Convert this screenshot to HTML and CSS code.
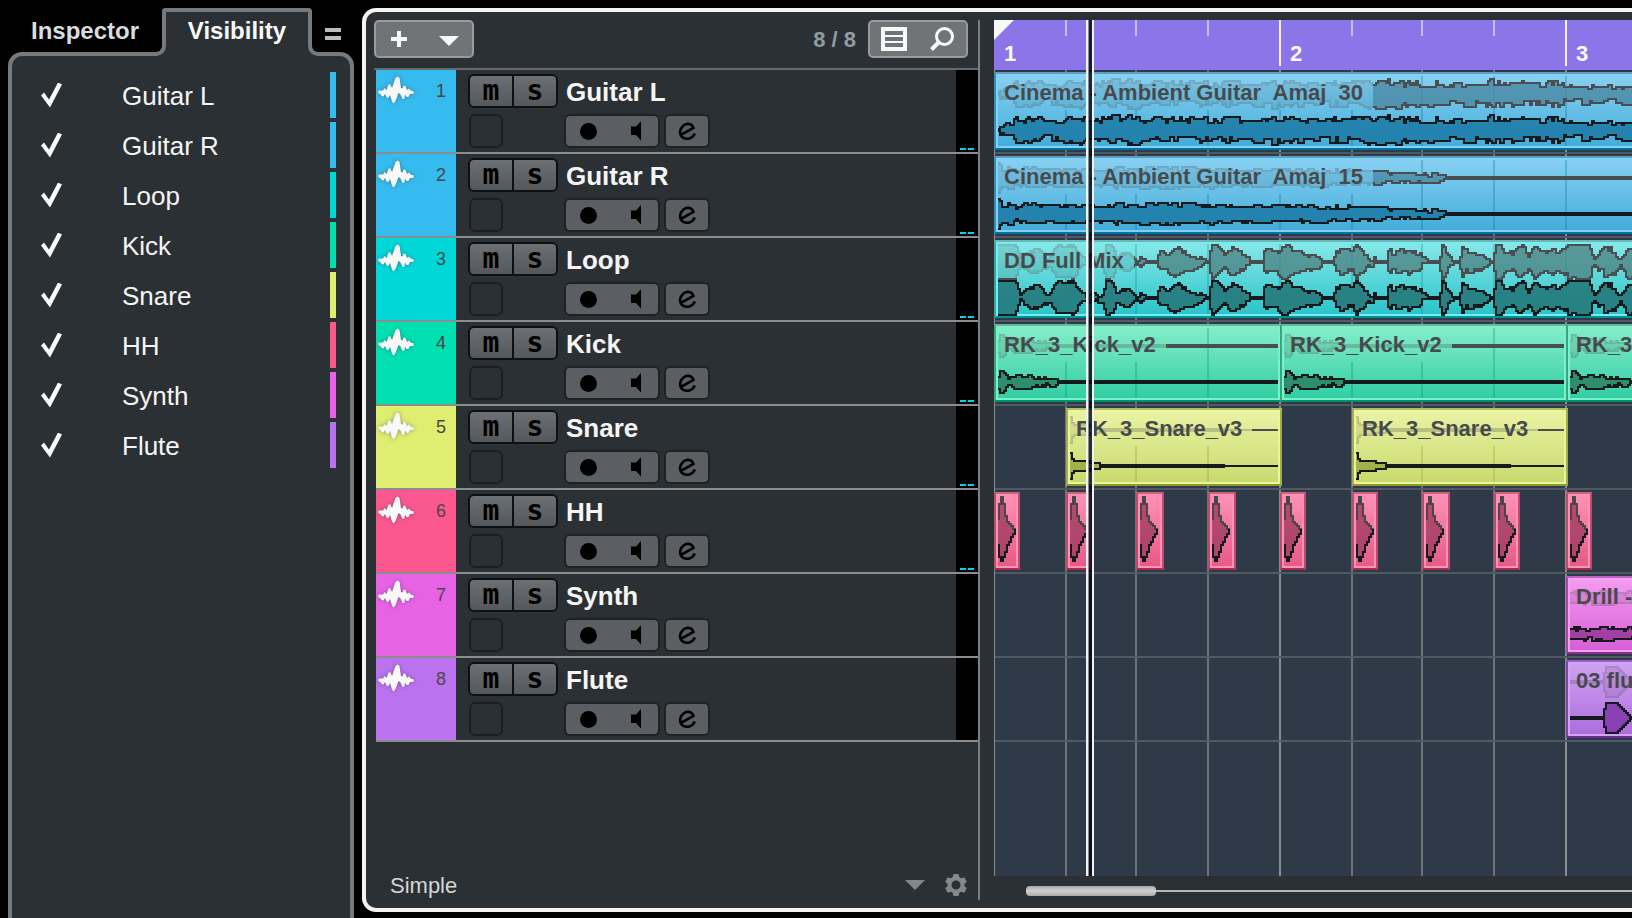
FILE: index.html
```html
<!DOCTYPE html>
<html lang="en">
<head>
<meta charset="utf-8">
<title>Project</title>
<link rel="stylesheet" href="styles.css">
</head>
<body>
<svg class="sprite" aria-hidden="true">
  <symbol id="i-wave" viewBox="0 0 36 28"><path d="M0 16 1 14.5 5 14.5 6.5 12 8.5 14 10.5 8.5 12.500 8.500 14 12 17.500 2 19.500 .5 21.500 2 23 12 24.500 12.500 25.500 9.500 27.500 10 29 14 31 12.500 33 14.800 35 15 36 16.500 35 18 32 18 30.500 21 28.500 21 27 18.500 26.500 22.500 24.500 23 22.500 18.500 20.500 17 17.500 25 15.500 27.500 14 25.500 12 19 10.500 22 8.500 21.500 7 18 5.500 20.500 3.500 20 2.500 18 1 17.800Z"/></symbol>
  <symbol id="i-speaker" viewBox="0 0 10 20"><path d="M0 5.500H5L10 0V19.500L5 14H0Z"/></symbol>
  <symbol id="i-edit" viewBox="0 0 18 18"><path d="M3.500 12.500 15.500 6C14 1.500 9 .8 5.500 3.500 1.500 7 1 12 4 15 8 18.200 14.500 17 16.800 11.500" fill="none" stroke="currentColor" stroke-width="2.600"/></symbol>
</svg>

<div class="app">
  <aside class="sidebar">
    <div class="tabs" role="tablist">
      <button class="tab" role="tab" aria-selected="false">Inspector</button>
      <button class="tab tab-active" role="tab" aria-selected="true">Visibility</button>
      <button class="tab-menu" aria-label="Tab settings"><span></span><span></span></button>
    </div>
    <div class="visibility" id="visibility" role="tabpanel"></div>
  </aside>

  <main class="project">
    <section class="tracklist">
      <header class="toolbar">
        <div class="button-group">
          <button aria-label="Add track"><svg width="16" height="16"><path d="M0 8H16M8 0V16" stroke="#f8f8f8" stroke-width="4"/></svg></button>
          <button class="add-menu" aria-label="Add track options"><svg width="20" height="10"><path d="M0 0H20L10 10Z" fill="#f8f8f8"/></svg></button>
        </div>
        <span class="count">8 / 8</span>
        <div class="button-group">
          <button aria-label="Track visibility"><svg width="26" height="24"><path fill="#f8f8f8" fill-rule="evenodd" d="M0 0H26V24H0ZM4 4V8H22V4ZM4 10V14H22V10ZM4 16V20H22V16Z"/></svg></button>
          <button aria-label="Find track"><svg width="24" height="24" fill="none" stroke="#f8f8f8"><circle cx="14.500" cy="9.500" r="8" stroke-width="3"/><path d="M9 15 1.500 22.500" stroke-width="4"/></svg></button>
        </div>
      </header>
      <div class="tracks" id="tracks"></div>
      <footer class="preset">
        <select class="preset-select" aria-label="Track controls preset"><option>Simple</option></select>
        <svg class="preset-arrow" width="20" height="10"><path d="M0 0H20L10 10Z" fill="#85888a"/></svg>
        <button class="gear" aria-label="Settings"><svg width="22" height="22" viewBox="-11 -11 22 22"><circle r="6.500" fill="none" stroke="#85888a" stroke-width="4"/><g fill="#85888a"><path id="tooth" d="M-2.500 -11H2.500L3.500 -7H-3.500Z"/><use href="#tooth" transform="rotate(60)"/><use href="#tooth" transform="rotate(120)"/><use href="#tooth" transform="rotate(180)"/><use href="#tooth" transform="rotate(240)"/><use href="#tooth" transform="rotate(300)"/></g></svg></button>
      </footer>
    </section>

    <section class="timeline">
      <div class="arrange">
        <div class="ruler" id="ruler"></div>
        <div class="lanes" id="lanes"></div>
        <div class="cursor"></div>
      </div>
      <div class="scrollbar"><div class="thumb"></div></div>
    </section>
  </main>
</div>
<script src="app.js"></script>
</body>
</html>
```

FILE: styles.css
```css
:root {
  --panel: #2b3034;
  --frame: #777a7d;
}

*, *::before, *::after { box-sizing: border-box; }

body {
  margin: 0;
  background: #000;
  color: #f5f5f5;
  font-family: "Liberation Sans", Arial, sans-serif;
  overflow: hidden;
}

button {
  margin: 0;
  padding: 0;
  border: 0;
  background: none;
  color: inherit;
  font: inherit;
}

svg { display: block; }
.sprite { position: absolute; width: 0; height: 0; }

.app {
  display: flex;
  gap: 8px;
  height: 100vh;
  padding: 8px 0 0 8px;
}

/* Sidebar */
.sidebar {
  flex: 0 0 346px;
  display: flex;
  flex-direction: column;
}

.tabs {
  display: flex;
  height: 44px;
}

.tab {
  width: 154px;
  height: 44px;
  padding-top: 2px;
  color: #dcdcdc;
  font-size: 24px;
  font-weight: bold;
}

.tab-active {
  position: relative;
  z-index: 1;
  width: 150px;
  height: 48px;
  padding: 0 0 6px;
  border: 4px solid var(--frame);
  border-bottom: 0;
  border-radius: 4px 4px 0 0;
  background: var(--panel);
  color: #fafafa;
}

.tab-active::before,
.tab-active::after {
  content: "";
  position: absolute;
  bottom: 0;
  width: 12px;
  height: 14px;
  border: 0 solid var(--frame);
  border-bottom-width: 4px;
  background: #000;
}

.tab-active::before {
  left: -12px;
  border-right-width: 4px;
  border-bottom-right-radius: 10px;
  box-shadow: 3px 3px 0 var(--panel);
  clip-path: inset(0);
}

.tab-active::after {
  right: -12px;
  border-left-width: 4px;
  border-bottom-left-radius: 10px;
  box-shadow: -3px 3px 0 var(--panel);
  clip-path: inset(0);
}

.tab-menu {
  display: flex;
  flex-direction: column;
  gap: 4px;
  margin-left: 13px;
  padding-top: 20px;
}

.tab-menu span {
  width: 16px;
  height: 4px;
  background: #bcbcbc;
}

.visibility {
  flex: 1;
  display: flex;
  flex-direction: column;
  gap: 4px;
  padding: 16px 14px 0 28px;
  border: 4px solid var(--frame);
  border-bottom: 0;
  border-radius: 14px 14px 0 0;
  background: var(--panel);
}

.vis-row {
  display: flex;
  align-items: center;
  height: 46px;
  font-size: 26px;
}

.vis-check {
  appearance: none;
  width: 22px;
  height: 25px;
  margin: 0 60px 0 0;
}

.vis-check:checked {
  background: #fafafa;
  clip-path: polygon(1px 13px, 4px 10px, 9px 17px, 18px 0, 22px 2px, 10px 25px);
}

.vis-name {
  flex: 1;
  padding-top: 2px;
}

.vis-color {
  width: 6px;
  height: 46px;
  background: var(--color);
}

/* Project window */
.project {
  flex: 1;
  min-width: 0;
  display: flex;
  margin-bottom: 6px;
  padding-top: 8px;
  border: 4px solid #f4f4f4;
  border-right: 0;
  border-radius: 14px 0 0 14px;
  background: var(--panel);
  overflow: hidden;
}

.tracklist {
  flex: 0 0 614px;
  display: flex;
  flex-direction: column;
  margin-bottom: 8px;
  padding-left: 8px;
  border-right: 2px solid #7d8082;
}

.toolbar {
  display: flex;
  align-items: flex-start;
  height: 50px;
  padding-right: 10px;
  border-bottom: 2px solid #67696c;
}

.button-group {
  display: flex;
  width: 100px;
  height: 38px;
  border: 2px solid #9a9b9e;
  border-radius: 5px;
  background: #717477;
}

.button-group button {
  flex: 1;
  display: grid;
  place-items: center;
}

.button-group .add-menu { padding: 4px 0 0 4px; }

.count {
  margin-left: auto;
  padding-right: 12px;
  color: #919da5;
  font-size: 22px;
  font-weight: bold;
  line-height: 40px;
}

.tracks { margin-left: 2px; }

.track {
  display: flex;
  height: 84px;
  border-bottom: 2px solid #8b8c8d;
}

.track-head {
  display: flex;
  justify-content: space-between;
  width: 80px;
  padding: 6px 10px 0 2px;
  background: var(--color);
}

.track-head svg {
  fill: #f8f8f8;
  filter: drop-shadow(0 0 2px rgba(60, 60, 90, .5));
}

.track-number {
  color: #474747;
  font-size: 18px;
  line-height: 30px;
}

.track-controls {
  flex: 1;
  display: grid;
  grid-template-columns: 90px 1fr;
  grid-template-rows: 34px 34px;
  gap: 6px 6px;
  padding: 4px 0 0 12px;
}

.mute-solo {
  display: flex;
  gap: 2px;
  border: 2px solid #0e1114;
  border-radius: 6px;
  background: #0e1114;
  overflow: hidden;
}

.mute-solo button {
  flex: 1;
  height: 30px;
  background: linear-gradient(#6c6f74, #54585c);
  color: #000;
  font-family: "DejaVu Sans Mono", monospace;
  font-size: 28px;
  font-weight: bold;
  line-height: 24px;
}

.track-name {
  padding-left: 2px;
  font-size: 26px;
  font-weight: bold;
  line-height: 36px;
}

.slot {
  width: 34px;
  height: 34px;
  margin-left: 1px;
  border: 2px solid #1b1f22;
  border-radius: 6px;
}

.record-row {
  display: flex;
  gap: 4px;
}

.pad {
  display: flex;
  height: 34px;
  border: 2px solid #202221;
  border-radius: 6px;
  background: #5b5f63;
  color: #000;
}

.pad-wide { width: 96px; }
.pad-edit { width: 46px; }

.pad button {
  flex: 1;
  display: grid;
  place-items: center;
}

.record-dot {
  width: 17px;
  height: 17px;
  border-radius: 50%;
  background: #000;
}

.pad-wide button:last-child { padding-left: 4px; }

.meter {
  display: flex;
  align-items: flex-end;
  gap: 2px;
  width: 22px;
  padding: 0 4px 2px;
  background: #000;
}

.meter span {
  width: 6px;
  height: 2px;
  background: #00d5ee;
}

.preset {
  display: flex;
  align-items: center;
  height: 30px;
  margin-top: auto;
  padding: 0 11px 0 16px;
}

.preset-select {
  flex: 1;
  appearance: none;
  padding: 0;
  border: 0;
  background: none;
  color: #d4d6d7;
  font-family: inherit;
  font-size: 22px;
}

.preset-arrow { margin-right: 20px; }

/* Timeline */
.timeline {
  flex: 1;
  min-width: 0;
  display: flex;
  flex-direction: column;
  margin-left: 14px;
}

.arrange {
  position: relative;
  flex: 1;
  display: flex;
  flex-direction: column;
  overflow: hidden;
}

.ruler {
  position: relative;
  height: 50px;
  background: #8c75e8;
}

.ruler::before {
  content: "";
  position: absolute;
  width: 20px;
  height: 20px;
  background: #f8f8f8;
  clip-path: polygon(0 0, 100% 0, 0 100%);
}

.tick {
  position: absolute;
  top: 0;
  width: 2px;
  height: 16px;
  background: #c9bff4;
}

.tick-bar {
  height: 46px;
  background: #f4f2fc;
}

.bar-number {
  position: absolute;
  top: 22px;
  color: #fafafa;
  font-size: 22px;
  font-weight: bold;
  line-height: 24px;
}

.lanes {
  position: relative;
  flex: 1;
  border-left: 1px solid #8b8e90;
  background: #2e3a47;
}

.lane {
  position: relative;
  height: 84px;
  border-bottom: 2px solid #525a61;
}

.beat {
  position: absolute;
  top: 0;
  bottom: 0;
  width: 2px;
  background: #6e7377;
}

.beat-bar { background: #8b8e90; }

.clip {
  position: absolute;
  top: 2px;
  height: 78px;
  border: 2px solid var(--edge);
  border-top-color: var(--edge-top);
  border-left-color: var(--edge-side);
  border-right-color: var(--edge-side);
  background: linear-gradient(var(--top), var(--bottom));
  box-shadow: inset 0 0 0 2px var(--rim);
  overflow: hidden;
}

.clip svg {
  position: absolute;
  top: -2px;
  left: -2px;
}

.clip-label {
  position: relative;
  z-index: 0;
  display: inline-block;
  height: 34px;
  margin: 2px 0 0 2px;
  padding: 0 10px 0 6px;
  color: #474a4c;
  font-size: 22px;
  font-weight: bold;
  line-height: 34px;
  white-space: pre;
}

/* Fades the waveform behind the label with the clip's own gradient. */
.clip-label::before {
  content: "";
  position: absolute;
  inset: 0;
  z-index: -1;
  background: linear-gradient(var(--top), var(--bottom)) 0 -2px / 100% 74px;
  opacity: .72;
}

.wave-fill { fill: var(--wave); }
.wave-line { fill: none; stroke: #151a1c; stroke-width: 2; }
.upper .wave-fill { fill: color-mix(in srgb, var(--wave) 65%, #999); opacity: .8; }
.upper .wave-line { stroke: #4b4e50; }
.lower .wave-fill { opacity: .92; }
.hit .wave-fill { opacity: .8; }
.hit .hit-top { stroke: #4e454a; }
.clip-grid { fill: var(--edge); opacity: .3; }

.blue { --top: #88d1f3; --bottom: #42acd8; --edge-top: #5c9fc4; --edge-side: #2f8fbd; --edge: #0073a6; --rim: #84d1f4; --wave: #1f7fa9; }
.cyan { --top: #88e8e8; --bottom: #29c3c8; --edge-top: #6fb5b5; --edge-side: #35a5a8; --edge: #009298; --rim: #74eef0; --wave: #267c7e; }
.green { --top: #86edca; --bottom: #30cda3; --edge-top: #6bb899; --edge-side: #35a680; --edge: #009368; --rim: #7af0cb; --wave: #2b8767; }
.yellow { --top: #eaf3a4; --bottom: #c8d96d; --edge-top: #b3bd68; --edge-side: #a1ad4e; --edge: #8c9a30; --rim: #eaf59c; --wave: #9fab48; }
.pink { --top: #ff92b6; --bottom: #e65987; --edge-top: #d0637f; --edge-side: #c04a6c; --edge: #a82950; --rim: #fc92b4; --wave: #a03c62; }
.magenta { --top: #f49cf2; --bottom: #d65dd4; --edge-top: #c060c0; --edge-side: #a846a8; --edge: #8f2c90; --rim: #f0a2f0; --wave: #9f3ba0; }
.violet { --top: #d0a2f2; --bottom: #ac6cdc; --edge-top: #9860c8; --edge-side: #8044b0; --edge: #6a2894; --rim: #d4a4f4; --wave: #863cb0; }

.cursor {
  position: absolute;
  top: 0;
  bottom: 0;
  left: 92px;
  width: 8px;
  border: solid #f2f2f2;
  border-width: 0 2px;
  background: linear-gradient(90deg, #888 1px, rgba(0, 8, 20, .82) 1px);
}

.scrollbar {
  display: flex;
  align-items: center;
  height: 32px;
  padding: 0 0 2px 32px;
}

.scrollbar::after {
  content: "";
  flex: 1;
  height: 2px;
  background: #b5b5b5;
}

.thumb {
  width: 130px;
  height: 10px;
  border-radius: 4px;
  background: linear-gradient(#aaa, #d0d0d0, #aaa);
}
```

FILE: app.js
```js
const tracks = [
  { name: "Guitar L", color: "#35bbee", level: true },
  { name: "Guitar R", color: "#35bbee", level: true },
  { name: "Loop", color: "#00d8d8", level: true },
  { name: "Kick", color: "#00e0b0", level: true },
  { name: "Snare", color: "#dfee70", level: true },
  { name: "HH", color: "#fb5890", level: true },
  { name: "Synth", color: "#e862e6", level: false },
  { name: "Flute", color: "#bb72ee", level: false }
];

const beats = [71, 141, 213, 285, 357, 427, 499, 571];
const isBar = b => b === 285 || b === 571;

/* Envelopes: [x, amplitude] pairs in clip pixels. */
const guitarL = [[4, 1], [8, 3], [10, 5], [20, 5], [22, 15], [25, 9], [30, 9], [36, 14], [40, 8], [46, 12], [50, 8], [60, 7], [72, 9], [80, 12], [100, 10], [140, 12], [155, 10], [240, 10], [280, 12], [345, 10], [384, 12], [450, 9], [500, 11], [560, 9], [640, 7]];
const guitarR = [[4, 14], [8, 9], [12, 8], [18, 11], [24, 7], [34, 10], [50, 8], [110, 8], [150, 9], [180, 10], [240, 8], [290, 8], [350, 7], [400, 5], [440, 3], [462, 2], [464, 1], [640, 1]];
const loop = [[4, 18], [22, 18], [27, 3], [36, 9], [44, 13], [56, 3], [62, 14], [66, 17], [80, 16], [86, 7], [93, 3], [96, 5], [103, 3], [110, 3], [113, 18], [120, 16], [123, 6], [129, 9], [136, 8], [142, 1], [145, 2], [148, 6], [153, 2], [156, 1], [163, 1], [166, 10], [173, 9], [184, 14], [189, 10], [206, 5], [214, 1], [216, 1], [218, 18], [221, 18], [231, 7], [238, 13], [246, 9], [256, 1], [269, 1], [272, 12], [286, 12], [290, 18], [294, 15], [303, 12], [306, 9], [326, 5], [329, 1], [339, 1], [343, 10], [348, 12], [359, 9], [363, 18], [368, 12], [376, 3], [381, 2], [383, 1], [393, 1], [396, 13], [399, 6], [403, 11], [413, 12], [426, 8], [429, 3], [437, 1], [446, 1], [449, 18], [452, 10], [460, 3], [461, 1], [466, 1], [469, 13], [473, 10], [486, 8], [494, 2], [500, 1], [503, 18], [506, 18], [511, 9], [519, 8], [524, 16], [529, 15], [536, 6], [541, 17], [546, 12], [556, 9], [560, 14], [563, 8], [573, 14], [578, 18], [596, 18], [600, 3], [604, 6], [613, 14], [621, 10], [626, 3], [631, 8], [634, 16], [640, 14]];
const kick = [[4, 5], [8, 12], [11, 9], [15, 3], [18, 4], [24, 7], [30, 6], [36, 7], [41, 3], [49, 5], [54, 3], [59, 4], [64, 2], [66, 1], [284, 1]];
const snare = [[4, 15], [6, 9], [8, 6], [18, 5], [28, 3], [34, 2], [36, 1], [156, 1], [158, 0], [212, 0]];
const drill = [[4, 5], [34, 5], [36, 7], [60, 5], [80, 5]];
const flute = [[4, 1], [38, 1], [40, 15], [51, 15], [56, 10], [60, 5], [64, 1], [80, 4]];

const clips = [
  { lane: 0, x: 0, w: 900, tone: "blue", label: "Cinema - Ambient Guitar  Amaj  30", env: guitarL, noise: 7, seed: 7 },
  { lane: 1, x: 0, w: 900, tone: "blue", label: "Cinema - Ambient Guitar  Amaj  15", env: guitarR, noise: 4, seed: 3 },
  { lane: 2, x: 0, w: 900, tone: "cyan", label: "DD Full Mix", env: loop, noise: 5, seed: 11 },
  { lane: 3, x: 0, w: 288, tone: "green", label: "RK_3_Kick_v2", env: kick, noise: 3, seed: 5 },
  { lane: 3, x: 286, w: 288, tone: "green", label: "RK_3_Kick_v2", env: kick, noise: 3, seed: 5 },
  { lane: 3, x: 572, w: 288, tone: "green", label: "RK_3_Kick_v2", env: kick, noise: 3, seed: 5 },
  { lane: 4, x: 72, w: 216, tone: "yellow", label: "RK_3_Snare_v3", env: snare, noise: 0, seed: 1 },
  { lane: 4, x: 358, w: 216, tone: "yellow", label: "RK_3_Snare_v3", env: snare, noise: 0, seed: 1 },
  ...[0, 72, 142, 214, 286, 358, 428, 500, 572].map(x => ({ lane: 5, x, w: x === 142 || x === 214 || x === 428 ? 28 : 26, tone: "pink", hit: true })),
  { lane: 6, x: 572, w: 400, tone: "magenta", label: "Drill -", env: drill, noise: 3, seed: 9 },
  { lane: 7, x: 572, w: 400, tone: "violet", label: "03 flu", env: flute, noise: 0, seed: 2 }
];

function level(env, x) {
  for (let i = 1; i < env.length; i++) {
    const [x0, a0] = env[i - 1], [x1, a1] = env[i];
    if (x <= x1) return a0 + (a1 - a0) * (x - x0) / (x1 - x0);
  }
  return env[env.length - 1][1];
}

function wave(env, mid, noise, seed, cls) {
  let s = seed * 7919;
  const rnd = () => (s = (s * 16807 + 11) % 2147483647) / 2147483647;
  const snap = a => a < .5 ? 0 : Math.min(17, Math.max(1, Math.round((a - 1) / 2) * 2 + 1));
  const up = [], down = [];
  const end = env[env.length - 1][0];
  /* Each edge holds its offset for a few samples, so the outline moves in short runs. */
  let nu = 0, nd = 0;
  for (let x = env[0][0]; x < end; x += 2) {
    const a = level(env, x + 1);
    if (rnd() < .5) nu = (rnd() - .5) * noise;
    if (rnd() < .5) nd = (rnd() - .5) * noise;
    const quiet = a < 1.6;
    up.push([x, mid - snap(quiet ? a : Math.max(1, a + nu))]);
    down.push([x, mid + snap(quiet ? a : Math.max(1, a + nd))]);
  }
  const steps = p => p.map(([x, y]) => `V${y}H${x + 2}`).join("");
  const x0 = up[0][0];
  const back = [...down].reverse().map(([x, y]) => `V${y}H${x}`).join("");
  return `<g class="${cls}"><path class="wave-fill" d="M${x0} ${up[0][1]}${steps(up)}${back}Z"/>` +
    `<path class="wave-line" d="M${x0} ${up[0][1]}${steps(up)}M${x0} ${down[0][1]}${steps(down)}"/></g>`;
}

function hit() {
  return `<g class="hit"><path class="wave-fill" d="M4 28V12H6V5H10V12H12V24H14V30H16V32H18V34H20V37H22V42H20V45H18V50H16V53H14V60H12V65H10V69H7V65H4Z"/>` +
    `<path class="wave-line hit-top" d="M5 28V12H7V5H9V12H11V24H13V30H15V32H17V34H19V37H22"/>` +
    `<path class="wave-line" d="M21 37V42H19V45H17V50H15V53H13V60H11V65H9V69H7V65H5V52"/></g>`;
}

function clipGrid(c) {
  const labelEnd = c.label ? c.label.length * 11 + 10 : 0;
  return beats.map(b => b - c.x).filter(b => b > 4 && b < c.w - 4)
    .map(b => {
      const top = b < labelEnd ? 38 : 4;
      return `<rect class="clip-grid" x="${b}" y="${top}" width="2" height="${74 - top}"/>`;
    }).join("");
}

function clipHtml(c) {
  const body = c.hit ? hit() : clipGrid(c) +
    wave(c.env, 22, c.noise, c.seed, "upper") + wave(c.env, 58, c.noise, c.seed, "lower");
  return `<div class="clip ${c.tone}" style="left:${c.x - 1}px;width:${c.w}px">` +
    `<svg width="${c.w}" height="78" shape-rendering="crispEdges" aria-hidden="true">${body}</svg>` +
    (c.label ? `<span class="clip-label">${c.label}</span>` : "") + `</div>`;
}

document.getElementById("visibility").innerHTML = tracks.map((t, i) => `
  <div class="vis-row" style="--color:${t.color}">
    <input class="vis-check" type="checkbox" id="vis-${i}" checked>
    <label class="vis-name" for="vis-${i}">${t.name}</label>
    <span class="vis-color"></span>
  </div>`).join("");

document.getElementById("tracks").innerHTML = tracks.map((t, i) => `
  <div class="track" style="--color:${t.color}">
    <div class="track-head"><svg width="36" height="28"><use href="#i-wave"/></svg><span class="track-number">${i + 1}</span></div>
    <div class="track-controls">
      <div class="mute-solo"><button aria-label="Mute">m</button><button aria-label="Solo">s</button></div>
      <div class="track-name">${t.name}</div>
      <div class="slot"></div>
      <div class="record-row">
        <div class="pad pad-wide">
          <button aria-label="Record enable"><span class="record-dot"></span></button>
          <button aria-label="Monitor"><svg width="10" height="20"><use href="#i-speaker"/></svg></button>
        </div>
        <div class="pad pad-edit"><button aria-label="Edit channel"><svg width="18" height="18"><use href="#i-edit"/></svg></button></div>
      </div>
    </div>
    <div class="meter">${t.level ? "<span></span><span></span>" : ""}</div>
  </div>`).join("");

document.getElementById("ruler").innerHTML =
  beats.map(b => `<span class="tick${isBar(b) ? " tick-bar" : ""}" style="left:${b}px"></span>`).join("") +
  [10, 296, 582].map((x, i) => `<span class="bar-number" style="left:${x}px">${i + 1}</span>`).join("");

document.getElementById("lanes").innerHTML =
  beats.map(b => `<span class="beat${isBar(b) ? " beat-bar" : ""}" style="left:${b - 1}px"></span>`).join("") +
  tracks.map((t, i) => `<div class="lane">${clips.filter(c => c.lane === i).map(clipHtml).join("")}</div>`).join("");
```
